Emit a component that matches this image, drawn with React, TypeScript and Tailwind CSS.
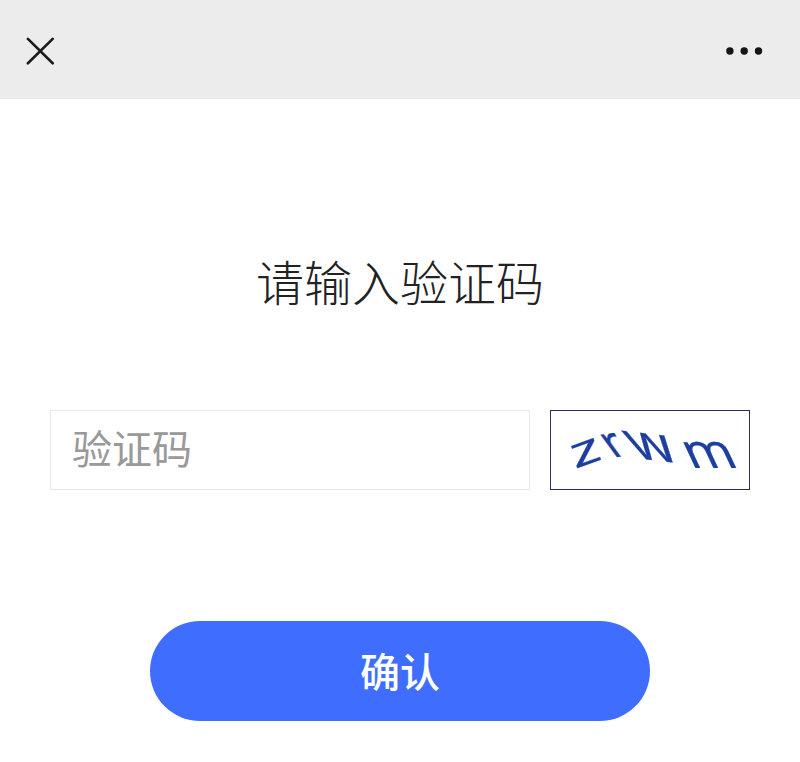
import React from 'react';

const captchaChars = [
  { char: 'z', transform: 'matrix(1.5 -0.54 0.33 1.02 25 59)' },
  { char: 'r', transform: 'matrix(1.12 -0.12 0.76 1.04 63 47.5)' },
  { char: 'w', transform: 'matrix(1.4 0.16 0.78 1.3 87.5 48.5)' },
  { char: 'm', transform: 'matrix(1.32 0 0.56 1.2 141 57.5)' },
];

function NavBar() {
  return (
    <header className="flex h-[99px] items-center justify-between bg-[#ececec] pt-0.5 pr-[37px] pl-[26px]">
      <button type="button" aria-label="关闭">
        <svg className="block size-7" viewBox="0 0 28 28" fill="none" stroke="#1b1b1b" strokeWidth="2.6" strokeLinecap="round">
          <path d="M1.9 1.9 26.7 26.3M26.7 1.9 1.9 26.3" />
        </svg>
      </button>
      <button type="button" aria-label="更多">
        <svg className="block h-2 w-[37px]" viewBox="0 0 37 8" fill="#151515">
          <circle cx="3.9" cy="4" r="3.7" />
          <circle cx="18.2" cy="4" r="3.7" />
          <circle cx="32.5" cy="4" r="3.7" />
        </svg>
      </button>
    </header>
  );
}

function Captcha() {
  return (
    <button type="button" className="h-20 w-[200px] border border-[#302a5c] bg-white">
      <svg
        className="block h-full w-full overflow-visible font-['Noto_Sans',sans-serif]"
        viewBox="1 1 198 78"
        fill="#1d3f9f"
        stroke="#1d3f9f"
        strokeWidth="0.2"
        fontSize="40"
      >
        {captchaChars.map((item) => (
          <text key={item.char} transform={item.transform}>
            {item.char}
          </text>
        ))}
      </svg>
    </button>
  );
}

export default function App() {
  return (
    <div className="h-[762px] w-[800px] overflow-hidden bg-white font-['Noto_Sans_CJK_SC',sans-serif]">
      <NavBar />
      <main className="flex flex-col items-center">
        <h1 className="mt-[145px] text-[48px] leading-[72px] font-light text-[#222]">请输入验证码</h1>
        <div className="mt-[94px] flex w-[700px] gap-5">
          <input
            type="text"
            placeholder="验证码"
            className="h-20 w-[480px] border border-[#e8e8e8] px-[21px] pb-1.5 text-[40px] text-[#333] outline-none placeholder:text-[#999]"
          />
          <Captcha />
        </div>
        <button type="button" className="mt-[131px] h-[100px] w-[500px] rounded-full bg-[#3f6eff] pb-0.5 text-[40px] font-medium text-white">
          确认
        </button>
      </main>
    </div>
  );
}
